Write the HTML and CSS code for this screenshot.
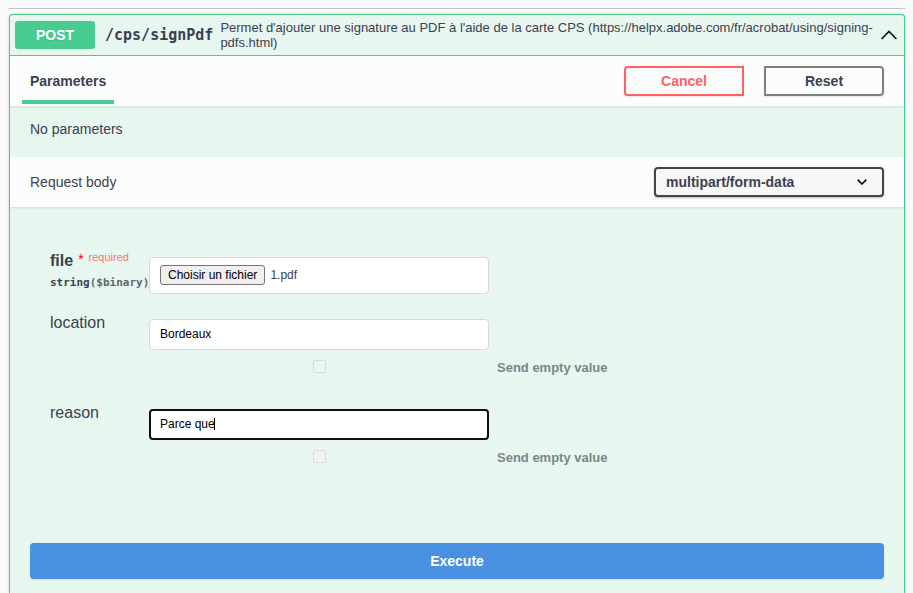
FILE: index.html
```html
<!DOCTYPE html>
<html lang="fr">
<head>
<meta charset="utf-8">
<meta name="viewport" content="width=device-width, initial-scale=1">
<title>POST /cps/signPdf</title>
<link rel="stylesheet" href="styles.css">
</head>
<body>
<main class="page">
  <section class="opblock">
    <header class="summary">
      <span class="method">POST</span>
      <span class="path">/cps/signPdf</span>
      <span class="description">Permet d'ajouter une signature au PDF à l'aide de la carte CPS (https://helpx.adobe.com/fr/acrobat/using/signing-pdfs.html)</span>
      <button class="toggle" type="button" aria-label="Collapse operation">
        <svg width="16" height="10" viewBox="0 0 16 10" fill="none" stroke="#111" stroke-width="1.6"><path d="M0.6 9 8 1.4 15.4 9"/></svg>
      </button>
    </header>

    <div class="section-header">
      <h2 class="tab">Parameters</h2>
      <div class="actions">
        <button class="btn cancel" type="button">Cancel</button>
        <button class="btn reset" type="button">Reset</button>
      </div>
    </div>
    <p class="no-params">No parameters</p>

    <div class="section-header">
      <label class="body-title" for="content-type">Request body</label>
      <select class="content-type" id="content-type">
        <option>multipart/form-data</option>
      </select>
    </div>

    <form class="fields">
      <div class="field">
        <div class="field-name">
          <span class="name required-name">file<span class="star">*</span><span class="required">required</span></span>
          <span class="type">string<span class="format">($binary)</span></span>
        </div>
        <label class="file-box">
          <input class="file-input" type="file" aria-label="file">
          <span class="file-button">Choisir un fichier</span>
          <span>1.pdf</span>
        </label>
      </div>
      <div class="field">
        <label class="field-name name" for="location">location</label>
        <div class="field-value">
          <input class="text-input" id="location" type="text" value="Bordeaux">
          <label class="empty-value"><input class="check" type="checkbox" disabled><span>Send empty value</span></label>
        </div>
      </div>
      <div class="field">
        <label class="field-name name" for="reason">reason</label>
        <div class="field-value">
          <input class="text-input active" id="reason" type="text" value="Parce que">
          <label class="empty-value"><input class="check" type="checkbox" disabled><span>Send empty value</span></label>
        </div>
      </div>
    </form>

    <div class="execute-row">
      <button class="execute" type="button">Execute</button>
    </div>
  </section>
</main>
</body>
</html>
```
FILE: styles.css
```css
* {
  box-sizing: border-box;
}

body {
  margin: 0;
  background: #fafafa;
  color: #3b4151;
  font-family: "Liberation Sans", Arial, sans-serif;
  font-size: 14px;
  line-height: 16px;
}

button,
input,
select {
  font-family: inherit;
}

.page {
  display: flex;
  flex-direction: column;
  min-height: 100vh;
  padding: 8px 8px 0 9px;
}

.page::before {
  content: "";
  height: 1px;
  margin-bottom: 5px;
  background: #c0c2c7;
}

.opblock {
  flex: 1;
  display: flex;
  flex-direction: column;
  border: 1px solid #49cc90;
  border-bottom: 0;
  border-radius: 4px 4px 0 0;
  background: #e8f6f0;
  box-shadow: 0 0 3px rgba(0, 0, 0, 0.19);
}

.summary {
  display: flex;
  align-items: center;
  padding: 5px;
  height: 41px;
  border-bottom: 1px solid #49cc90;
}

.method {
  flex: none;
  width: 80px;
  padding: 6px 0;
  border-radius: 3px;
  background: #49cc90;
  color: #fff;
  font-size: 14px;
  font-weight: 700;
  text-align: center;
  text-shadow: 0 1px 0 rgba(0, 0, 0, 0.1);
}

.path {
  flex: none;
  padding: 0 7px 0 10px;
  font-family: "DejaVu Sans Mono", monospace;
  font-size: 15px;
  font-weight: 700;
}

.description {
  flex: 1;
  font-size: 13px;
  line-height: 15px;
}

.toggle {
  display: flex;
  padding: 0;
  margin-right: 2px;
  border: 0;
  background: none;
}

.section-header {
  display: flex;
  align-items: center;
  justify-content: space-between;
  height: 50px;
  padding: 0 20px;
  background: rgba(255, 255, 255, 0.8);
  box-shadow: 0 1px 2px rgba(0, 0, 0, 0.1);
}

.tab {
  align-self: stretch;
  margin: 0 -8px;
  padding: 17px 8px 0;
  height: 48px;
  border-bottom: 4px solid #49cc90;
  font-size: 14px;
  line-height: 16px;
}

.actions {
  display: flex;
  gap: 20px;
}

.btn {
  width: 120px;
  height: 30px;
  border: 2px solid gray;
  background: transparent;
  box-shadow: 0 1px 2px rgba(0, 0, 0, 0.1);
  color: #3b4151;
  font-size: 14px;
  font-weight: 700;
}

.cancel {
  border-color: #ff6060;
  border-radius: 4px 0 0 4px;
  color: #ff6060;
}

.reset {
  border-radius: 0 4px 4px 0;
}

.no-params {
  margin: 0;
  padding: 15px 20px 20px;
}

.content-type {
  width: 230px;
  height: 30px;
  padding: 0 10px;
  border: 2px solid #41444e;
  border-radius: 4px;
  appearance: none;
  background: #f7f7f7 url("data:image/svg+xml,%3Csvg xmlns='http://www.w3.org/2000/svg' width='10' height='6' fill='none' stroke='%23111' stroke-width='1.7'%3E%3Cpath d='M.7.7 5 5 9.3.7'/%3E%3C/svg%3E") no-repeat right 15px center;
  box-shadow: 0 1px 2px rgba(0, 0, 0, 0.25);
  color: #3b4151;
  font-size: 14px;
  font-weight: 700;
}

.fields {
  display: flex;
  flex-direction: column;
  gap: 25px;
  padding: 50px 40px 0;
}

.field {
  display: grid;
  grid-template-columns: 99px minmax(0, 1fr);
}

.name {
  font-size: 16px;
  line-height: 8px;
}

.required-name {
  display: flex;
  align-items: flex-start;
  font-weight: 700;
}

.star {
  margin: 0 5px;
  color: #f00;
  font-size: 14px;
  font-weight: 400;
  line-height: 4px;
}

.required {
  color: #fa7468;
  font-size: 11px;
  font-weight: 400;
  line-height: 0;
}

.type {
  display: block;
  padding-top: 10px;
  font-family: "DejaVu Sans Mono", monospace;
  font-size: 11px;
  font-weight: 700;
  line-height: 16px;
}

.format {
  color: #62666f;
}

.file-box {
  display: flex;
  align-items: center;
  gap: 5px;
  max-width: 340px;
  height: 37px;
  padding: 0 10px 2px;
  border: 1px solid #d9d9d9;
  border-radius: 4px;
  background: #fff;
  font-size: 12px;
}

.file-input {
  position: absolute;
  width: 1px;
  height: 1px;
  opacity: 0;
}

.file-button {
  padding: 1px 7px;
  border: 1px solid #767676;
  border-radius: 3px;
  background: #efefef;
  color: #000;
}

.text-input {
  display: block;
  width: 100%;
  max-width: 340px;
  height: 31px;
  padding: 0 10px 2px;
  border: 1px solid #d9d9d9;
  border-radius: 4px;
  background: #fff;
  color: #000;
  font-size: 12px;
}

.active {
  outline: 2px solid #101010;
  outline-offset: -2px;
  /* insertion caret after the value */
  background: #fff linear-gradient(#000, #000) no-repeat 64px 8px / 1px 12px;
}

.empty-value {
  display: grid;
  grid-template-columns: 340px auto;
  column-gap: 8px;
  height: 34px;
  padding-top: 10px;
  color: #7a858c;
  font-size: 13px;
  font-weight: 700;
}

.check {
  width: 13px;
  height: 13px;
  margin: 0 auto;
  border: 1px solid #d5dcd9;
  border-radius: 2px;
  appearance: none;
  background: #eff4f2;
}

.execute-row {
  margin-top: auto;
  padding: 20px 20px 14px;
}

.execute {
  display: block;
  width: 100%;
  height: 36px;
  border: 0;
  border-radius: 4px;
  background: #4990e2;
  box-shadow: 0 1px 2px rgba(0, 0, 0, 0.1);
  color: #fff;
  font-size: 14px;
  font-weight: 700;
}
```
